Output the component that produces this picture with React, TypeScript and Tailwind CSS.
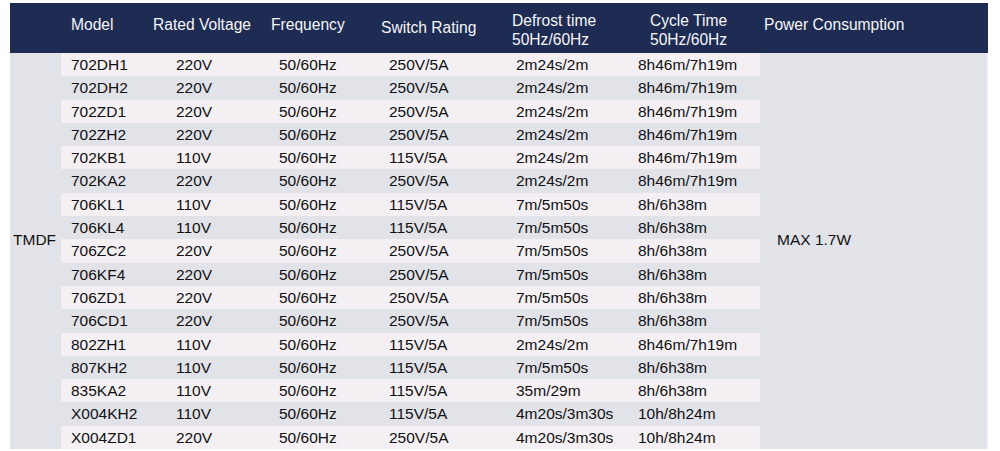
const rows: [string, string, string, string, string, string][] = [
  ['702DH1', '220V', '50/60Hz', '250V/5A', '2m24s/2m', '8h46m/7h19m'],
  ['702DH2', '220V', '50/60Hz', '250V/5A', '2m24s/2m', '8h46m/7h19m'],
  ['702ZD1', '220V', '50/60Hz', '250V/5A', '2m24s/2m', '8h46m/7h19m'],
  ['702ZH2', '220V', '50/60Hz', '250V/5A', '2m24s/2m', '8h46m/7h19m'],
  ['702KB1', '110V', '50/60Hz', '115V/5A', '2m24s/2m', '8h46m/7h19m'],
  ['702KA2', '220V', '50/60Hz', '250V/5A', '2m24s/2m', '8h46m/7h19m'],
  ['706KL1', '110V', '50/60Hz', '115V/5A', '7m/5m50s', '8h/6h38m'],
  ['706KL4', '110V', '50/60Hz', '115V/5A', '7m/5m50s', '8h/6h38m'],
  ['706ZC2', '220V', '50/60Hz', '250V/5A', '7m/5m50s', '8h/6h38m'],
  ['706KF4', '220V', '50/60Hz', '250V/5A', '7m/5m50s', '8h/6h38m'],
  ['706ZD1', '220V', '50/60Hz', '250V/5A', '7m/5m50s', '8h/6h38m'],
  ['706CD1', '220V', '50/60Hz', '250V/5A', '7m/5m50s', '8h/6h38m'],
  ['802ZH1', '110V', '50/60Hz', '115V/5A', '2m24s/2m', '8h46m/7h19m'],
  ['807KH2', '110V', '50/60Hz', '115V/5A', '7m/5m50s', '8h/6h38m'],
  ['835KA2', '110V', '50/60Hz', '115V/5A', '35m/29m', '8h/6h38m'],
  ['X004KH2', '110V', '50/60Hz', '115V/5A', '4m20s/3m30s', '10h/8h24m'],
  ['X004ZD1', '220V', '50/60Hz', '250V/5A', '4m20s/3m30s', '10h/8h24m'],
];

export default function App() {
  return (
    <div className="min-h-screen bg-white pt-[3px] pl-[10px]" style={{ fontFamily: '"Liberation Sans", Arial, sans-serif' }}>
      <div className="w-[978px]">
        {/* Header */}
        <div className="flex h-[50px] bg-[#1e2b52] text-[15.6px] text-[#f4f5f8] leading-[19px]">
          <div className="w-[61px] shrink-0" />
          <div className="w-[82px] shrink-0 pt-[12px]">Model</div>
          <div className="w-[118px] shrink-0 pt-[12px]">Rated Voltage</div>
          <div className="w-[110px] shrink-0 pt-[12px]">Frequency</div>
          <div className="w-[131px] shrink-0 pt-[15px]">Switch Rating</div>
          <div className="w-[138px] shrink-0 pt-[8px]">
            <div>Defrost time</div>
            <div>50Hz/60Hz</div>
          </div>
          <div className="w-[114px] shrink-0 pt-[8px]">
            <div>Cycle Time</div>
            <div>50Hz/60Hz</div>
          </div>
          <div className="flex-1 pt-[12px]">Power Consumption</div>
        </div>

        {/* Body */}
        <div className="grid h-[396px] grid-rows-[repeat(17,1fr)] grid-cols-[51px_105px_103px_110px_127px_122px_132px_227px] bg-[#e2e2e9] text-[15.5px] text-[#111111] border-r border-[#f0f0f4]">
          <div className="col-start-1 row-start-1 row-span-17 flex items-center pl-[3px] pb-[22px]">TMDF</div>
          {rows.map((r, i) =>
            r.map((c, j) => (
              <div
                key={`${i}-${j}`}
                className={`flex items-center pl-[10px] ${i % 2 === 0 ? 'bg-[#f3eff3]' : ''}`}
                style={{ gridRow: i + 1, gridColumn: j + 2 }}
              >
                {c}
              </div>
            ))
          )}
          <div className="col-start-8 row-start-1 row-span-17 flex items-center pl-[17px] pb-[22px]">MAX 1.7W</div>
        </div>
      </div>
    </div>
  );
}
